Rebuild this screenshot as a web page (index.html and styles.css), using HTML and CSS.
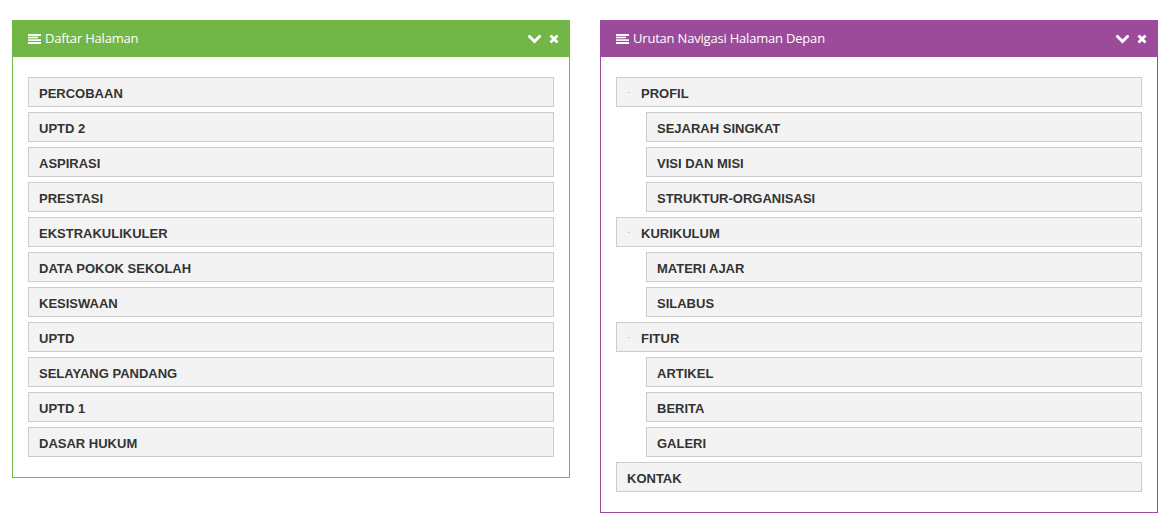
FILE: index.html
```html
<!DOCTYPE html>
<html>
<head>
<meta charset="utf-8">
<link rel="stylesheet" href="styles.css">
</head>
<body>
<div class="page">
  <div class="panel panel-green">
    <div class="panel-head">
      <svg class="ico-list" width="14" height="10" viewBox="0 0 14 10"><rect x="0" y="0" width="13" height="2" fill="#fff"/><rect x="0" y="2.7" width="10" height="1.6" fill="#fff"/><rect x="0" y="5.3" width="13" height="1.6" fill="#fff"/><rect x="0" y="8" width="13" height="2" fill="#fff"/></svg>
      <span class="title">Daftar Halaman</span>
      <span class="tools">
        <svg width="13" height="9" viewBox="0 0 13 9"><path d="M1.5 1.5 L6.5 6.5 L11.5 1.5" fill="none" stroke="#fff" stroke-width="3" stroke-linecap="square"/></svg>
        <svg width="10" height="10" viewBox="0 0 10 10"><path d="M1.5 1.5 L8.5 8.5 M8.5 1.5 L1.5 8.5" fill="none" stroke="#fff" stroke-width="2.8"/></svg>
      </span>
    </div>
    <div class="panel-body">
      <div class="item">PERCOBAAN</div>
      <div class="item">UPTD 2</div>
      <div class="item">ASPIRASI</div>
      <div class="item">PRESTASI</div>
      <div class="item">EKSTRAKULIKULER</div>
      <div class="item">DATA POKOK SEKOLAH</div>
      <div class="item">KESISWAAN</div>
      <div class="item">UPTD</div>
      <div class="item">SELAYANG PANDANG</div>
      <div class="item">UPTD 1</div>
      <div class="item">DASAR HUKUM</div>
    </div>
  </div>

  <div class="panel panel-purple">
    <div class="panel-head">
      <svg class="ico-list" width="14" height="10" viewBox="0 0 14 10"><rect x="0" y="0" width="13" height="2" fill="#fff"/><rect x="0" y="2.7" width="10" height="1.6" fill="#fff"/><rect x="0" y="5.3" width="13" height="1.6" fill="#fff"/><rect x="0" y="8" width="13" height="2" fill="#fff"/></svg>
      <span class="title">Urutan Navigasi Halaman Depan</span>
      <span class="tools">
        <svg width="13" height="9" viewBox="0 0 13 9"><path d="M1.5 1.5 L6.5 6.5 L11.5 1.5" fill="none" stroke="#fff" stroke-width="3" stroke-linecap="square"/></svg>
        <svg width="10" height="10" viewBox="0 0 10 10"><path d="M1.5 1.5 L8.5 8.5 M8.5 1.5 L1.5 8.5" fill="none" stroke="#fff" stroke-width="2.8"/></svg>
      </span>
    </div>
    <div class="panel-body">
      <div class="item"><span class="dash">-</span>PROFIL</div>
      <div class="child-list">
        <div class="item">SEJARAH SINGKAT</div>
        <div class="item">VISI DAN MISI</div>
        <div class="item">STRUKTUR-ORGANISASI</div>
      </div>
      <div class="item"><span class="dash">-</span>KURIKULUM</div>
      <div class="child-list">
        <div class="item">MATERI AJAR</div>
        <div class="item">SILABUS</div>
      </div>
      <div class="item"><span class="dash">-</span>FITUR</div>
      <div class="child-list">
        <div class="item">ARTIKEL</div>
        <div class="item">BERITA</div>
        <div class="item">GALERI</div>
      </div>
      <div class="item">KONTAK</div>
    </div>
  </div>
</div>
</body>
</html>
```

FILE: styles.css
```css
html, body {
  margin: 0;
  padding: 0;
  background: #fff;
}

.page {
  display: flex;
  align-items: flex-start;
  gap: 30px;
  padding: 20px 0 0 12px;
}

.panel {
  width: 556px;
  border: 1px solid;
  background: #fff;
}

.panel-green {
  border-color: #72b647;
}

.panel-green .panel-head {
  background: #72b647;
}

.panel-purple {
  border-color: #9c4b9a;
}

.panel-purple .panel-head {
  background: #9c4b9a;
}

.panel-head {
  height: 36px;
  display: flex;
  align-items: center;
  padding: 0 10px 2px 15px;
  box-sizing: border-box;
  color: #fff;
  font-family: "Open Sans", "Liberation Sans", sans-serif;
  font-size: 13px;
}

.ico-list {
  margin-top: 1px;
  margin-right: 3px;
}

.title {
  flex: 1;
  letter-spacing: -0.2px;
}

.tools {
  display: flex;
  align-items: center;
  gap: 8px;
  margin-top: 2px;
}

.panel-body {
  padding: 20px 15px 15px;
}

.item {
  height: 28px;
  line-height: 31px;
  border: 1px solid #cccccc;
  background: #f3f3f3;
  margin-bottom: 5px;
  padding: 0 10px;
  font-family: "Liberation Sans", Arial, sans-serif;
  font-weight: bold;
  font-size: 13px;
  color: #333;
}

.dash {
  display: inline-block;
  width: 14px;
  font-weight: normal;
  font-size: 11px;
  color: #cfcfcf;
  vertical-align: top;
  line-height: 27px;
}

.child-list {
  padding-left: 30px;
}
```
